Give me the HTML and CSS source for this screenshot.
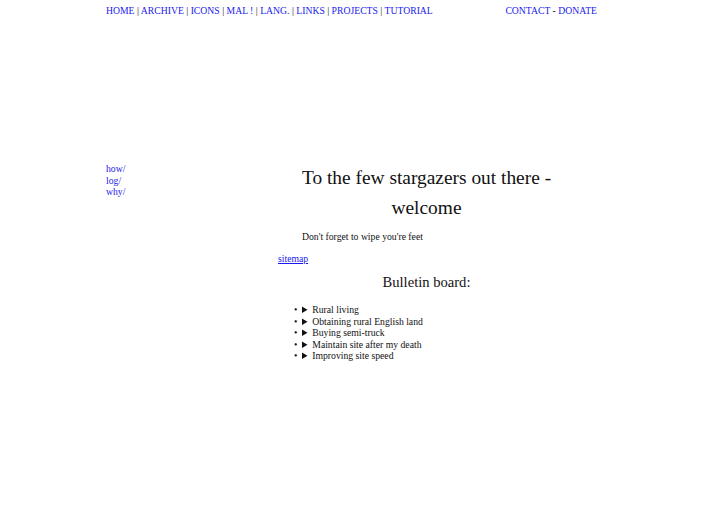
FILE: index.html
```html
<!DOCTYPE html>
<html>
<head>
<meta charset="utf-8">
<link rel="stylesheet" href="styles.css">
</head>
<body>
<div class="page">
  <nav class="topnav">
    <div class="navleft"><a href="#">HOME</a> | <a href="#">ARCHIVE</a> | <a href="#">ICONS</a> | <a href="#">MAL !</a> | <a href="#">LANG.</a> | <a href="#">LINKS</a> | <a href="#">PROJECTS</a> | <a href="#">TUTORIAL</a></div>
    <div class="navright"><a href="#">CONTACT</a> - <a href="#">DONATE</a></div>
  </nav>
  <div class="banner"></div>
  <div class="layout">
    <aside class="side">
      <a href="#">how/</a>
      <a href="#">log/</a>
      <a href="#">why/</a>
    </aside>
    <main class="main">
      <h1 class="title">To the few stargazers out there - welcome</h1>
      <p class="note">Don't forget to wipe you're feet</p>
      <a class="sitemap" href="#">sitemap</a>
      <h2 class="board">Bulletin board:</h2>
      <ul class="posts">
        <li><details><summary>Rural living</summary></details></li>
        <li><details><summary>Obtaining rural English land</summary></details></li>
        <li><details><summary>Buying semi-truck</summary></details></li>
        <li><details><summary>Maintain site after my death</summary></details></li>
        <li><details><summary>Improving site speed</summary></details></li>
      </ul>
    </main>
  </div>
</div>
</body>
</html>
```

FILE: styles.css
```css
html, body {
  margin: 0;
  padding: 0;
  background: #fff;
}
body {
  font-family: "Liberation Serif", "Times New Roman", serif;
  font-size: 9.7px;
  color: #111;
}
a {
  color: #1a1aee;
  text-decoration: none;
}
.page {
  width: 491px;
  margin: 0 auto;
}
.topnav {
  display: flex;
  justify-content: space-between;
  font-size: 9.7px;
  line-height: 13px;
  padding-top: 4px;
}
.banner {
  height: 145px;
}
.layout {
  display: grid;
  grid-template-columns: 172px 297px;
}
.side {
  display: flex;
  flex-direction: column;
  font-size: 9.7px;
  line-height: 11.5px;
  padding-top: 1px;
}
.title {
  font-weight: normal;
  font-size: 19.4px;
  line-height: 30px;
  text-align: center;
  margin: 0.5px 0 0;
}
.note {
  font-size: 9.7px;
  margin: 8.5px 0 0 24px;
}
.sitemap {
  display: block;
  font-size: 9.7px;
  text-decoration: underline;
  margin-top: 11px;
}
.board {
  font-weight: normal;
  font-size: 14.6px;
  text-align: center;
  margin: 10px 0 0;
}
.posts {
  font-size: 9.7px;
  line-height: 11.5px;
  margin: 13px 0 0;
  padding-left: 24px;
  list-style: none;
}
.posts li {
  display: flex;
  align-items: baseline;
}
.posts li::before {
  content: "\2022";
  flex: 0 0 8px;
  margin-left: -8px;
}
.posts details {
  flex: 1;
}
.posts summary {
  cursor: pointer;
}
```
